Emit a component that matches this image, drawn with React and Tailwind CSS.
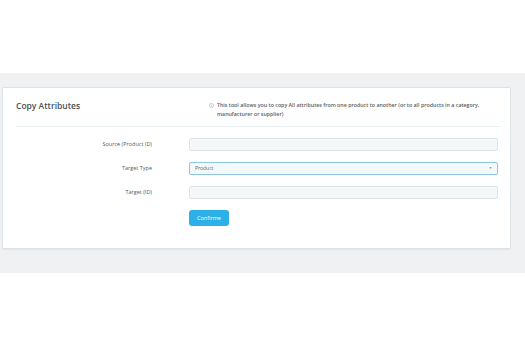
export default function App() {
  return (
    <div className="w-[525px] h-[343px] bg-white overflow-hidden" style={{ fontFamily: '"Open Sans", "Liberation Sans", sans-serif' }}>
      <div className="h-[73px]" />
      <div className="bg-[#eff1f2] pt-[14px] pb-[24px] pl-[2px] pr-[14px]">
        <div className="bg-white border border-[#dde3e6] rounded-[2px] shadow-[0_1px_1px_rgba(0,0,0,0.05)] h-[162px]">
          <div className="mx-[13px] mr-[10px] h-[39px] border-b border-[#e8edef] flex">
            <div className="w-[193px] pt-[11px] text-[8.5px] font-semibold leading-[14px] text-[#4b4e52]">Copy Attributes</div>
            <div className="pt-[13px] flex">
              <svg width="5" height="5" viewBox="0 0 10 10" className="mt-[1.5px] mr-[3px] shrink-0">
                <circle cx="5" cy="5" r="4.2" fill="none" stroke="#9aa4a8" strokeWidth="1" />
                <rect x="4.5" y="4.2" width="1" height="3.2" fill="#9aa4a8" />
                <rect x="4.5" y="2.4" width="1" height="1" fill="#9aa4a8" />
              </svg>
              <div className="text-[5.3px] leading-[9px] text-[#5a6064] w-[272px]">
                <span className="font-semibold">This tool allows you to copy All attributes from one product to another (or to all products in a category, manufacturer or supplier)</span>
              </div>
            </div>
          </div>
          <div className="pt-[11px] flex flex-col gap-[11.5px] text-[5.5px] text-[#555b5e]">
            <div className="flex items-center h-[12.5px]">
              <div className="w-[149px] text-right">Source (Product ID)</div>
              <div className="ml-[37px] w-[309px] h-[12.5px] bg-[#f5f8f9] border border-[#dde5e8] rounded-[2px]" />
            </div>
            <div className="flex items-center h-[12.5px]">
              <div className="w-[149px] text-right">Target Type</div>
              <div className="ml-[37px] w-[309px] h-[12.5px] bg-[#f3f8fa] border border-[#8ec5e3] rounded-[2px] flex items-center justify-between px-[5px] text-[5px] text-[#5d6b70]">
                <span>Product</span>
                <span className="text-[3px]">▼</span>
              </div>
            </div>
            <div className="flex items-center h-[12.5px]">
              <div className="w-[149px] text-right">Target (ID)</div>
              <div className="ml-[37px] w-[309px] h-[12.5px] bg-[#f5f8f9] border border-[#dde5e8] rounded-[2px]" />
            </div>
            <div className="flex items-center">
              <div className="w-[149px]" />
              <div className="ml-[37px] w-[40px] h-[16px] bg-[#2cb0ea] rounded-[3px] text-white text-[5.5px] flex items-center justify-center">Confirme</div>
            </div>
          </div>
        </div>
      </div>
    </div>
  );
}
